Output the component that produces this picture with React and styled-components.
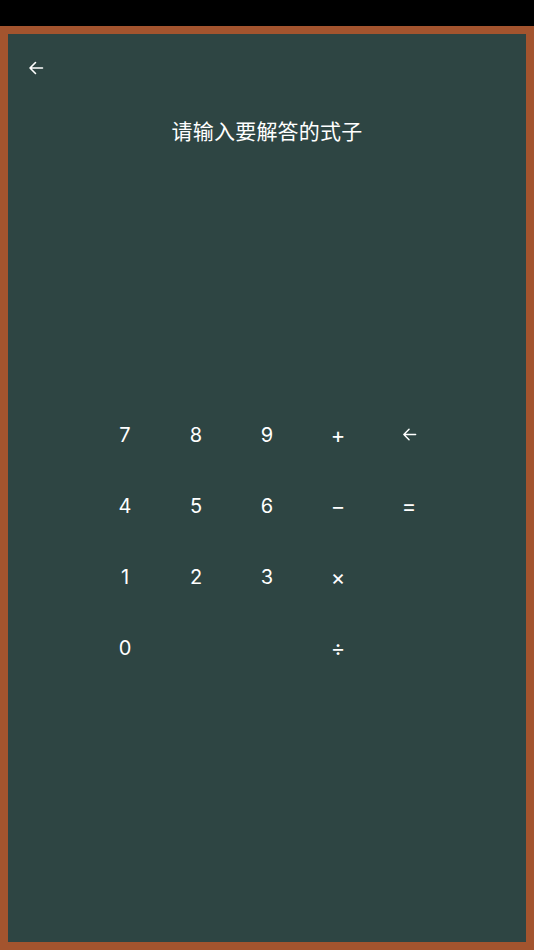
import React from 'react';
import styled, { createGlobalStyle } from 'styled-components';

const GlobalStyle = createGlobalStyle`
  html, body {
    margin: 0;
    padding: 0;
    background: #000;
  }
  body {
    font-family: Inter, "Noto Sans", "Noto Sans CJK SC", sans-serif;
  }
`;

const Screen = styled.div`
  width: 534px;
  height: 950px;
  display: flex;
  flex-direction: column;
  background: #000;
`;

const StatusBar = styled.div`
  height: 26px;
  flex-shrink: 0;
`;

const Frame = styled.div`
  flex: 1;
  border: 8px solid #a3542e;
  background: #2e4543;
  display: flex;
  flex-direction: column;
  color: #fff;
`;

const TopBar = styled.div`
  height: 68px;
  display: flex;
  align-items: center;
  padding-left: 19px;
`;

const BackButton = styled.button`
  background: none;
  border: none;
  padding: 0;
  width: 18px;
  height: 18px;
  display: flex;
  align-items: center;
  justify-content: center;
  color: #fff;
`;

const Title = styled.div`
  margin-top: 14px;
  text-align: center;
  font-family: "Noto Sans CJK SC", sans-serif;
  font-size: 21px;
  line-height: 28px;
  letter-spacing: 0.2px;
`;

const Keypad = styled.div`
  margin: 255px auto 0;
  display: grid;
  grid-template-columns: repeat(5, 71px);
  grid-auto-rows: 71px;
`;

const Key = styled.button`
  background: none;
  border: none;
  padding: 0;
  color: #fff;
  font-family: Inter, "Noto Sans", sans-serif;
  font-size: ${(p) => (p.$op ? '22px' : '20px')};
  display: flex;
  align-items: center;
  justify-content: center;
  visibility: ${(p) => (p.$empty ? 'hidden' : 'visible')};
`;

const Arrow = ({ size = 16 }) => (
  <svg width={size} height={size} viewBox="0 0 16 16" fill="none">
    <path
      d="M14.5 8H2M7.5 2.5L2 8l5.5 5.5"
      stroke="#fff"
      strokeWidth="1.6"
      strokeLinecap="round"
      strokeLinejoin="round"
    />
  </svg>
);

const keys = [
  '7', '8', '9', '+', 'back',
  '4', '5', '6', '−', '=',
  '1', '2', '3', '×', '',
  '0', '', '', '÷', '',
];

export default function App() {
  return (
    <>
      <GlobalStyle />
      <Screen>
        <StatusBar />
        <Frame>
          <TopBar>
            <BackButton>
              <Arrow size={16} />
            </BackButton>
          </TopBar>
          <Title>请输入要解答的式子</Title>
          <Keypad>
            {keys.map((k, i) => (
              <Key key={i} $empty={!k} $op={'+−×÷='.includes(k) && k !== ''}>
                {k === 'back' ? <Arrow size={15} /> : k}
              </Key>
            ))}
          </Keypad>
        </Frame>
      </Screen>
    </>
  );
}
